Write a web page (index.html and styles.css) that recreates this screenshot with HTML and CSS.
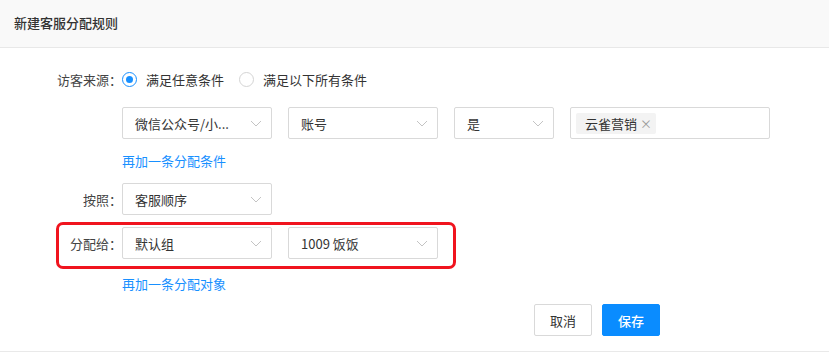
FILE: index.html
```html
<!DOCTYPE html>
<html lang="zh-CN">
<head>
  <meta charset="UTF-8" />
  <meta name="viewport" content="width=device-width, initial-scale=1.0" />
  <title>新建客服分配规则</title>
  <link rel="stylesheet" href="styles.css">
</head>
<body>

  <div class="dialog">
    <header class="dialog-header">新建客服分配规则</header>

    <div class="dialog-body">
      <!-- 访客来源 -->
      <div class="form-row">
        <label class="form-label">访客来源：</label>
        <div class="form-field">
          <span class="radio checked"></span>
          <span class="radio-text">满足任意条件</span>
          <span class="radio"></span>
          <span class="radio-text">满足以下所有条件</span>
        </div>
      </div>

      <div class="form-row cond-row">
        <div class="form-label"></div>
        <div class="form-field">
          <div class="select w150"><span class="select-value">微信公众号/小...</span><svg class="arrow" width="12" height="7" viewBox="0 0 12 7"><polyline points="1,1 6,6 11,1" fill="none" stroke="#c4c4c4" stroke-width="1"/></svg></div>
          <div class="select w150"><span class="select-value">账号</span><svg class="arrow" width="12" height="7" viewBox="0 0 12 7"><polyline points="1,1 6,6 11,1" fill="none" stroke="#c4c4c4" stroke-width="1"/></svg></div>
          <div class="select w100"><span class="select-value">是</span><svg class="arrow" width="12" height="7" viewBox="0 0 12 7"><polyline points="1,1 6,6 11,1" fill="none" stroke="#c4c4c4" stroke-width="1"/></svg></div>
          <div class="tag-input">
            <span class="tag">云雀营销 <span class="tag-close">×</span></span>
          </div>
        </div>
      </div>

      <div class="form-row link-row">
        <div class="form-label"></div>
        <a class="link">再加一条分配条件</a>
      </div>

      <!-- 按照 -->
      <div class="form-row order-row">
        <label class="form-label">按照：</label>
        <div class="form-field">
          <div class="select w150"><span class="select-value">客服顺序</span><svg class="arrow" width="12" height="7" viewBox="0 0 12 7"><polyline points="1,1 6,6 11,1" fill="none" stroke="#c4c4c4" stroke-width="1"/></svg></div>
        </div>
      </div>

      <!-- 分配给 (highlighted) -->
      <div class="form-row highlight">
        <label class="form-label">分配给：</label>
        <div class="form-field">
          <div class="select w150"><span class="select-value">默认组</span><svg class="arrow" width="12" height="7" viewBox="0 0 12 7"><polyline points="1,1 6,6 11,1" fill="none" stroke="#c4c4c4" stroke-width="1"/></svg></div>
          <div class="select w150 last"><span class="select-value">1009 饭饭</span><svg class="arrow" width="12" height="7" viewBox="0 0 12 7"><polyline points="1,1 6,6 11,1" fill="none" stroke="#c4c4c4" stroke-width="1"/></svg></div>
        </div>
      </div>

      <div class="form-row link-row2">
        <div class="form-label"></div>
        <a class="link">再加一条分配对象</a>
      </div>

      <div class="footer">
        <button class="btn">取消</button>
        <button class="btn btn-primary">保存</button>
      </div>
    </div>
  </div>

</body>
</html>
```

FILE: styles.css
```css
body {
  margin: 0;
  font-family: "Noto Sans CJK SC", "Noto Sans", sans-serif;
  font-size: 13px;
  color: #333;
  background: #fff;
}

.dialog {
  width: 829px;
  height: 352px;
  box-sizing: border-box;
  border-bottom: 1px solid #e9e9e9;
}

.dialog-header {
  height: 47px;
  line-height: 45px;
  padding-left: 14px;
  background: #f9f9f9;
  border-bottom: 1px solid #e8e8e8;
  font-weight: 500;
  color: #333;
}

.dialog-body {
  padding: 15px 0 0 56px;
}

.form-row {
  display: flex;
  align-items: center;
  height: 32px;
}

.form-label {
  width: 66px;
  flex-shrink: 0;
  display: flex;
  justify-content: flex-end;
  white-space: nowrap;
  color: #444;
}

.form-field {
  display: flex;
  align-items: center;
}

/* radios */
.radio {
  width: 15px;
  height: 15px;
  border: 1px solid #d4d4d4;
  border-radius: 50%;
  box-sizing: border-box;
  position: relative;
  flex-shrink: 0;
}

.radio.checked {
  border-color: #1890ff;
}

.radio.checked::after {
  content: "";
  position: absolute;
  left: 3px;
  top: 3px;
  width: 7px;
  height: 7px;
  border-radius: 50%;
  background: #1890ff;
}

.radio-text {
  margin: 0 15px 0 9px;
}

/* selects */
.cond-row {
  margin-top: 12px;
}

.select {
  height: 32px;
  box-sizing: border-box;
  border: 1px solid #d9d9d9;
  border-radius: 2px;
  padding: 0 9px 0 12px;
  margin-right: 16px;
  display: flex;
  align-items: center;
  justify-content: space-between;
}

.select.last {
  margin-right: 0;
}

.w150 { width: 150px; }
.w100 { width: 100px; }

.select-value {
  white-space: nowrap;
}

.tag-input {
  width: 200px;
  height: 32px;
  box-sizing: border-box;
  border: 1px solid #d9d9d9;
  border-radius: 2px;
  padding: 0 5px;
  display: flex;
  align-items: center;
}

.tag {
  height: 21px;
  line-height: 21px;
  padding: 0 4px 0 9px;
  background: #f3f3f3;
  border-radius: 2px;
}

.tag-close {
  color: #999;
  font-size: 12px;
}

/* links */
.link-row {
  height: 20px;
  margin-top: 11px;
}

.link-row2 {
  height: 20px;
  margin-top: 4px;
}

.link {
  color: #1890ff;
  cursor: pointer;
}

.order-row {
  margin-top: 13px;
}

/* red annotation box */
.highlight {
  width: fit-content;
  margin: 7px 0 0 0;
  padding: 2px 15px 7px 0;
  border: 3px solid #f0141e;
  border-radius: 7px;
}

.highlight .form-label {
  width: 63px;
}

/* footer */
.footer {
  width: 604px;
  margin-top: 11px;
  display: flex;
  justify-content: flex-end;
}

.btn {
  width: 58px;
  height: 32px;
  margin-left: 10px;
  border: 1px solid #d9d9d9;
  border-radius: 2px;
  background: #fff;
  color: #333;
  font-family: inherit;
  font-size: 13px;
  cursor: pointer;
}

.btn-primary {
  background: #0a8cff;
  border-color: #0a8cff;
  color: #fff;
  font-weight: 500;
}
```
